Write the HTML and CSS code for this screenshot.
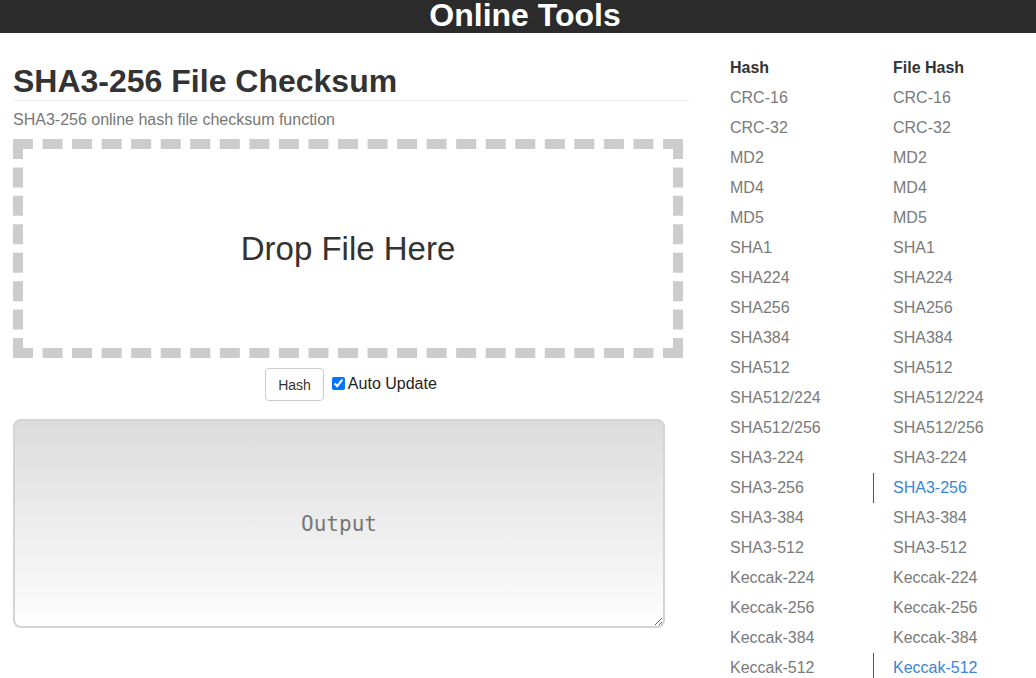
FILE: index.html
```html
<!DOCTYPE html>
<html>
<head>
<meta charset="utf-8">
<title>SHA3-256 File Checksum</title>
<link rel="stylesheet" href="styles.css">
</head>
<body>
<header class="topbar">Online Tools</header>
<div class="page">
  <main class="main">
    <h1 class="title">SHA3-256 File Checksum</h1>
    <p class="subtitle">SHA3-256 online hash file checksum function</p>
    <div class="dropzone">Drop File Here</div>
    <div class="controls">
      <button class="btn" type="button">Hash</button>
      <label class="auto"><input type="checkbox" checked> Auto Update</label>
    </div>
    <textarea class="output" placeholder="Output"></textarea>
  </main>
  <aside class="side">
    <ul class="nav">
      <li class="head">Hash</li>
      <li>CRC-16</li>
      <li>CRC-32</li>
      <li>MD2</li>
      <li>MD4</li>
      <li>MD5</li>
      <li>SHA1</li>
      <li>SHA224</li>
      <li>SHA256</li>
      <li>SHA384</li>
      <li>SHA512</li>
      <li>SHA512/224</li>
      <li>SHA512/256</li>
      <li>SHA3-224</li>
      <li>SHA3-256</li>
      <li>SHA3-384</li>
      <li>SHA3-512</li>
      <li>Keccak-224</li>
      <li>Keccak-256</li>
      <li>Keccak-384</li>
      <li>Keccak-512</li>
    </ul>
    <ul class="nav">
      <li class="head">File Hash</li>
      <li>CRC-16</li>
      <li>CRC-32</li>
      <li>MD2</li>
      <li>MD4</li>
      <li>MD5</li>
      <li>SHA1</li>
      <li>SHA224</li>
      <li>SHA256</li>
      <li>SHA384</li>
      <li>SHA512</li>
      <li>SHA512/224</li>
      <li>SHA512/256</li>
      <li>SHA3-224</li>
      <li class="active">SHA3-256</li>
      <li>SHA3-384</li>
      <li>SHA3-512</li>
      <li>Keccak-224</li>
      <li>Keccak-256</li>
      <li>Keccak-384</li>
      <li class="active">Keccak-512</li>
    </ul>
  </aside>
</div>
</body>
</html>
```
FILE: styles.css
```css
* { box-sizing: border-box; }
html, body { margin: 0; padding: 0; background: #fff; }
body {
  font-family: "Liberation Sans", Arial, sans-serif;
  color: #333;
  font-size: 16px;
  overflow: hidden;
}
.topbar {
  height: 33px;
  background: #2b2b2b;
  color: #fff;
  font-weight: bold;
  font-size: 32px;
  line-height: 30px;
  text-align: center;
  padding-left: 14px;
  overflow: hidden;
}
.page {
  display: flex;
  gap: 20px;
}
.main {
  width: 690px;
  padding-left: 13px;
  flex: none;
}
.title {
  margin: 30px 0 0;
  font-size: 32px;
  line-height: 36px;
  font-weight: bold;
  padding-bottom: 1px;
  border-bottom: 1px solid #eee;
}
.subtitle {
  margin: 9px 0 0;
  font-size: 16px;
  line-height: 20px;
  color: #777;
}
.dropzone {
  margin-top: 9px;
  width: 670px;
  height: 219px;
  border: 10px dashed #ccc;
  display: flex;
  align-items: center;
  justify-content: center;
  font-size: 33px;
  color: #333;
}
.controls {
  width: 670px;
  margin-top: 10px;
  display: flex;
  justify-content: center;
  align-items: center;
  gap: 8px;
  padding-left: 6px;
}
.btn {
  height: 33px;
  padding: 0 12px;
  font-family: "Liberation Sans", Arial, sans-serif;
  font-size: 14px;
  color: #333;
  background: #fff;
  border: 1px solid #ccc;
  border-radius: 4px;
}
.auto {
  display: flex;
  align-items: center;
  font-size: 16px;
  color: #222;
  margin-top: -2px;
}
.auto input {
  margin: 0 3px 0 0;
  width: 13px;
  height: 13px;
}
.output {
  display: block;
  margin-top: 18px;
  width: 652px;
  height: 209px;
  border: 2px solid #d4d4d4;
  border-radius: 8px;
  background: linear-gradient(#dcdcdc, #fefefe);
  font-family: "DejaVu Sans Mono", monospace;
  font-size: 21px;
  line-height: 24px;
  text-align: center;
  padding: 91px 10px 10px;
  resize: both;
  outline: none;
}
.output::placeholder { color: #777; opacity: 1; }
.side {
  display: flex;
  padding-top: 20px;
}
.nav {
  list-style: none;
  margin: 0;
  padding: 0;
  width: 163px;
}
.nav li {
  height: 30px;
  line-height: 30px;
  padding-left: 20px;
  color: #7a7a7a;
  font-size: 16px;
  white-space: nowrap;
}
.nav li.head {
  color: #333;
  font-weight: bold;
}
.nav li.active {
  color: #3a86d4;
  border-left: 1px solid #555;
  padding-left: 19px;
}
```
